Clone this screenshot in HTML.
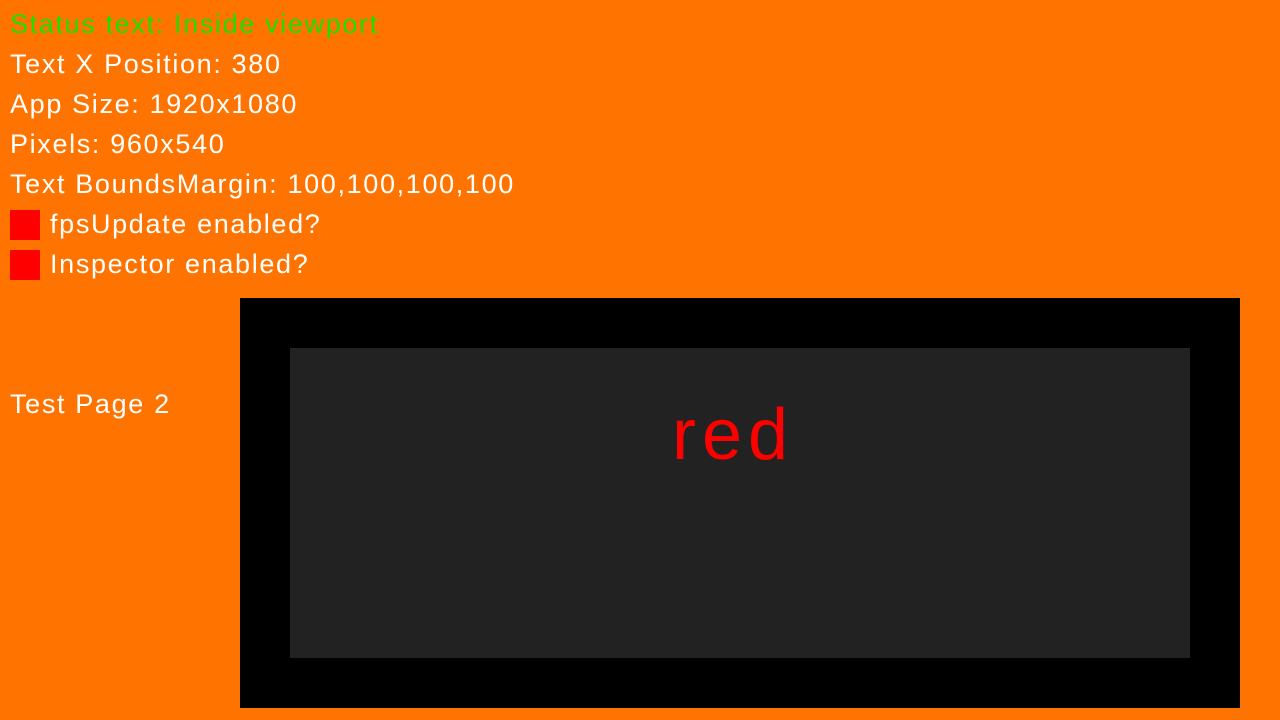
<!DOCTYPE html>
<html><head><style>
html,body{margin:0;padding:0}
body{width:1280px;height:720px;background:#ff7300;position:relative;overflow:hidden;font-family:"Liberation Sans",sans-serif;color:#fff}
.t{position:absolute;left:10px;font-size:27px;line-height:30px;white-space:nowrap;letter-spacing:1.65px}
.sq{position:absolute;left:10px;width:30px;height:30px;background:#ff0000}
</style></head><body>
<div class="t" style="top:9px;color:#22dd00">Status text: Inside viewport</div>
<div class="t" style="top:49px">Text X Position: 380</div>
<div class="t" style="top:89px">App Size: 1920x1080</div>
<div class="t" style="top:129px">Pixels: 960x540</div>
<div class="t" style="top:169px">Text BoundsMargin: 100,100,100,100</div>
<div class="sq" style="top:210px"></div>
<div class="t" style="top:209px;left:50px">fpsUpdate enabled?</div>
<div class="sq" style="top:250px"></div>
<div class="t" style="top:249px;left:50px">Inspector enabled?</div>
<div class="t" style="top:389px">Test Page 2</div>
<div style="position:absolute;left:240px;top:298px;width:1000px;height:410px;background:#000"></div>
<div style="position:absolute;left:290px;top:348px;width:900px;height:310px;background:#222"></div>
<div style="position:absolute;left:590px;top:390px;width:286px;text-align:center;font-size:72px;line-height:90px;color:#ff0000;letter-spacing:6px">red</div>
</body></html>
